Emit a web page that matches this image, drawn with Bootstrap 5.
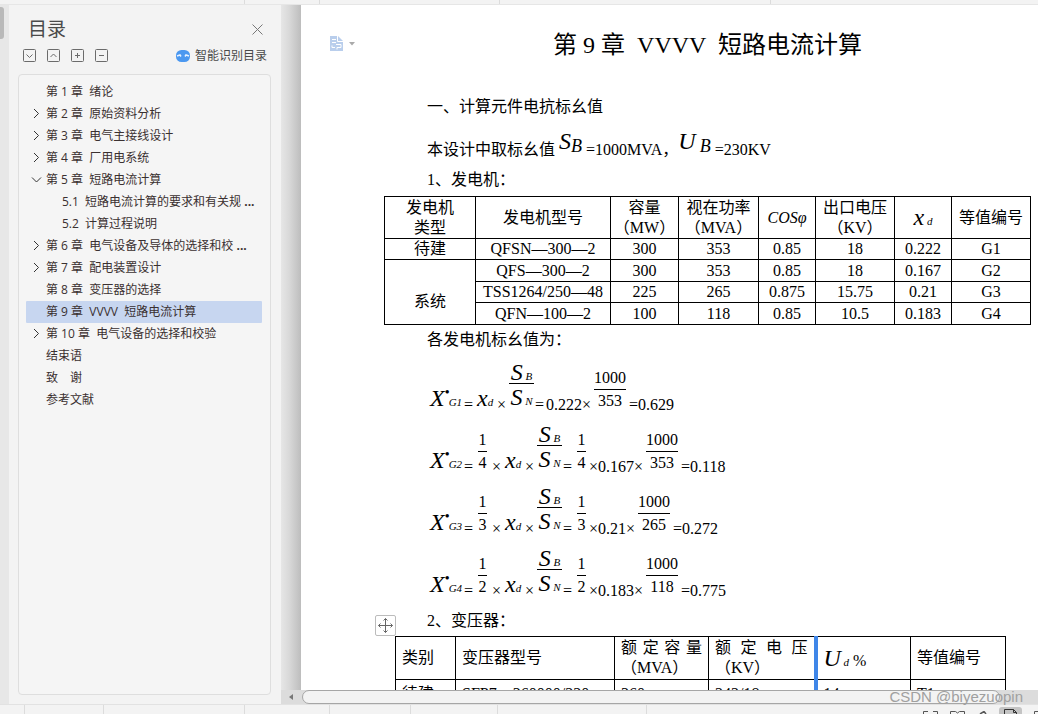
<!DOCTYPE html>
<html lang="zh-CN">
<head>
<meta charset="utf-8">
<meta name="viewport" content="width=device-width, initial-scale=1">
<title>第 9 章 VVVV 短路电流计算</title>
<link href="https://cdn.jsdelivr.net/npm/bootstrap@5.3.0/dist/css/bootstrap.min.css" rel="stylesheet">
<style>
  body { background: #f3f3f3; font-family: "Open Sans", "Noto Sans CJK SC", sans-serif; font-size: 12px; line-height: 22px; color: #3a3030; }
  svg { display: block; }

  /* window chrome */
  .top-strip { height: 5px; border-bottom: 1px solid #e6e6e6; }
  .tick { width: 1px; background: #dcdcdc; }
  .left-rail { width: 9px; background: #e7e7e7; }
  .left-thumb { width: 4px; height: 32px; margin-top: 2px; background: #b9b9b9; border-radius: 0 3px 3px 0; }

  /* outline panel */
  .outline { width: 272px; padding: 12px 10px 9px 9px; }
  .outline h1 { font-size: 19px; line-height: 24px; color: #4a4a4a; font-weight: 400; padding-left: 10px; }
  .tools { padding: 4px 0 0 5px; }
  .plain-btn { border: 0; background: none; padding: 0; color: #6b6b6b; }
  .tree-box { border: 1px solid #dedede; border-radius: 4px; background: #f5f5f5; padding: 6px 8px 0 7px; margin-top: 7px; }
  .tree-box a { height: 22px; color: #3a3030; text-decoration: none; white-space: pre; }
  .tree-box a.picked { background: #c7d6f0; border-radius: 1px; }
  .tree-box .mark-slot { width: 20px; padding: 0 0 2px 5px; }
  .tree-box .sub { padding-left: 16px; }
  .smart { color: #4a4a4a; text-decoration: none; }

  /* paper */
  .desk-edge { width: 20px; background: linear-gradient(90deg, #e6e6e6, #d9d9d9 40%, #bdbdbd); }
  .paper { background: #fff; color: #000; font-family: "Liberation Serif", "Noto Sans CJK SC", serif; font-size: 16px; line-height: 22px; padding: 0 7px 0 83px; }
  .paper h2 { font-size: 24px; line-height: 32px; font-weight: 400; margin: 24px 0 35px; white-space: pre; }
  .indent { padding-left: 43px; }
  .base-line { height: 43px; }
  .base-line .big { padding-bottom: 8px; }
  .base-line .mid { padding-bottom: 6px; }
  .after-table { padding-top: 4px; }
  .second-head { padding-top: 11px; padding-bottom: 4px; }
  .doc-flag { left: 29px; top: 31px; }
  .grid-table { table-layout: fixed; border-collapse: collapse; width: 100%; line-height: 20px; text-align: center; }
  .grid-table td, .grid-table th { border: 1px solid #000; padding: 0; font-weight: 400; height: 21px; }
  .grid-table tr:nth-child(odd) td { height: 22px; }
  .generators { margin-top: 1px; }
  .generators th { height: 42px; }
  .grid-table .low-cell { padding-top: 20px; }
  .transformers { margin-left: 11px; margin-right: 25px; }
  .transformers th, .transformers td { text-align: left; padding: 0 6px; height: 43px; }
  .transformers td { height: 28px; }
  .spread { text-align-last: justify; }
  .grip-line { border-left: 4px solid #3f86e8 !important; }
  .move-handle { width: 21px; height: 21px; border: 1px solid #bcbcbc; border-radius: 2px; background: #fff; padding: 2px; left: 74px; top: 610px; }

  /* formulas */
  .eq { height: 62px; }
  .eq > span, .eq > i { flex: none; }
  .big { font-size: 24px; line-height: 24px; font-style: italic; }
  .tiny { font-size: 11px; line-height: 14px; font-style: italic; }
  .mid { font-size: 18px; line-height: 18px; font-style: italic; }
  .plain { line-height: 16px; }
  .star { display: inline-block; width: 4px; line-height: 0; font-size: 14px; vertical-align: 9px; }
  .frac { line-height: 18px; text-align: center; padding-bottom: 3px; }
  .frac > span { display: block; }
  .frac > span:first-child { border-bottom: 1px solid #000; padding-bottom: 2px; }
  .frac > span:last-child { padding-top: 2px; }
  .w-one { width: 9px; margin: 0 3px; }
  .w-thousand { width: 32px; margin: 0 3px; }
  .w-sym { width: 25px; margin: 0 1px; padding-bottom: 0; }
  .w-sym i { line-height: inherit; }
  .w-sym > span:first-child { line-height: 14px; padding-bottom: 0; }
  .w-sym > span:last-child { line-height: 24px; padding-top: 1px; }
  .w-x { width: 37px; padding-left: 3px; padding-bottom: 1px; }
  .w-eq { width: 11px; }
  .w-xd { width: 20px; padding-left: 2px; padding-bottom: 1px; }
  .w-times { width: 13px; text-align: center; }

  /* bottom bars */
  .hbar { height: 14px; background: #dcdcdc; }
  .hbar-thumb { height: 14px; border: 1px solid #a6a6a6; border-radius: 7px; background: #f3f3f3; margin-right: 38px; }
  .status { height: 10px; border-top: 1px solid #e2e2e2; }
  .view-icons { gap: 12px; padding-top: 3px; right: 0; bottom: 0; }
  .view-on { width: 23px; height: 7px; background: #c4c4c4; border-radius: 3px 3px 0 0; padding: 2px 5px 0; }
  .watermark { right: 15px; bottom: 7px; font: 15px/20px "Liberation Sans", sans-serif; color: #a0a0a0; }
</style>
</head>
<body>
<div class="vh-100 d-flex flex-column overflow-hidden position-relative">
  <div class="top-strip flex-shrink-0 d-flex" data-gaps="244 74 179 270"></div>

  <div class="d-flex flex-grow-1 overflow-hidden">
    <div class="left-rail flex-shrink-0"><div class="left-thumb"></div></div>

    <aside class="outline flex-shrink-0 d-flex flex-column">
      <header class="d-flex justify-content-between align-items-center">
        <h1 class="m-0">目录</h1>
        <button class="plain-btn me-2" aria-label="关闭"><svg width="11" height="11" viewBox="0 0 11 11" fill="none" stroke="#777"><path d="M.5.5l10 10M10.500.5l-10 10"/></svg></button>
      </header>
      <div class="tools d-flex align-items-center">
        <div class="d-flex" style="gap:10px">
          <button class="plain-btn" aria-label="全部展开"><svg width="14" height="14" viewBox="0 0 14 14" fill="none" stroke="#6b6b6b"><rect x=".5" y=".5" width="12" height="12" rx="1"/><path d="M3.500 5.500l3 3 3-3"/></svg></button>
          <button class="plain-btn" aria-label="全部收起"><svg width="14" height="14" viewBox="0 0 14 14" fill="none" stroke="#6b6b6b"><rect x=".5" y=".5" width="12" height="12" rx="1"/><path d="M3.500 8l3-3 3 3"/></svg></button>
          <button class="plain-btn" aria-label="增加"><svg width="14" height="14" viewBox="0 0 14 14" fill="none" stroke="#6b6b6b"><rect x=".5" y=".5" width="12" height="12" rx="1"/><path d="M4 6.500h5M6.500 4v5"/></svg></button>
          <button class="plain-btn" aria-label="减少"><svg width="14" height="14" viewBox="0 0 14 14" fill="none" stroke="#6b6b6b"><rect x=".5" y=".5" width="12" height="12" rx="1"/><path d="M4 6.500h5"/></svg></button>
        </div>
        <a class="smart ms-auto me-1 d-flex align-items-center" style="gap:5px" href="#">
          <svg width="14" height="12" viewBox="0 0 14 12"><rect width="14" height="12" rx="5.500" fill="#4b98f0"/><path d="M1 6l3-1 1 1.500M9 6.500L10 5l3 1" fill="none" stroke="#e8f2ff" stroke-width="1.500"/></svg>智能识别目录</a>
      </div>
      <nav class="tree-box flex-grow-1 d-flex flex-column" aria-label="目录" id="tree"></nav>
    </aside>

    <div class="d-flex flex-column flex-grow-1 overflow-hidden">
      <div class="d-flex flex-grow-1 overflow-hidden">
        <div class="desk-edge flex-shrink-0"></div>
        <main class="paper flex-grow-1 position-relative overflow-hidden">
          <button class="plain-btn doc-flag position-absolute d-flex align-items-center" style="gap:6px" aria-label="段落">
            <svg width="13" height="15" viewBox="0 0 13 15"><path d="M0 0h8l5 5v10H0z" fill="#b9ceec"/><path d="M7.500 0v5.500H13M2 3.500h4M2 6.500h4M2 9.500v2h3M6 8.500h5v3H7v2" fill="none" stroke="#fff"/></svg>
            <svg width="6" height="4" viewBox="0 0 6 4"><path d="M0 0h6L3 3.500z" fill="#aaa"/></svg>
          </button>
          <h2 class="text-center">第 9 章  VVVV  短路电流计算</h2>
          <div class="indent">一、计算元件电抗标幺值</div>
          <div class="indent base-line d-flex align-items-end">
            <span>本设计中取标幺值</span><i class="big ps-1">S</i><i class="mid">B</i><span class="ps-1">=1000MVA，</span><i class="big">U</i><i class="mid ps-1">B</i><span class="ps-1">=230KV</span>
          </div>
          <div class="indent pt-2 pb-1">1、发电机：</div>
          <table class="grid-table generators">
            <colgroup><col style="width:91px"><col style="width:135px"><col style="width:68px"><col style="width:80px"><col style="width:57px"><col style="width:79px"><col style="width:57px"><col style="width:79px"></colgroup>
            <tr><th>发电机<br>类型</th><th>发电机型号</th><th>容量<br>（MW）</th><th>视在功率<br>（MVA）</th><th><i>COSφ</i></th><th>出口电压<br>（KV）</th><th><i class="big">x</i><i class="tiny"> d</i></th><th>等值编号</th></tr>
            <tr><td>待建</td><td>QFSN—300—2</td><td>300</td><td>353</td><td>0.85</td><td>18</td><td>0.222</td><td>G1</td></tr>
            <tr><td rowspan="3" class="low-cell">系统</td><td>QFS—300—2</td><td>300</td><td>353</td><td>0.85</td><td>18</td><td>0.167</td><td>G2</td></tr>
            <tr><td>TSS1264/250—48</td><td>225</td><td>265</td><td>0.875</td><td>15.75</td><td>0.21</td><td>G3</td></tr>
            <tr><td>QFN—100—2</td><td>100</td><td>118</td><td>0.85</td><td>10.5</td><td>0.183</td><td>G4</td></tr>
          </table>
          <div class="indent after-table">各发电机标幺值为：</div>
          <div class="indent" id="formulas"></div>
          <div class="indent second-head">2、变压器：</div>
          <div class="transformers">
            <table class="grid-table">
              <colgroup><col style="width:60px"><col style="width:159px"><col style="width:94px"><col style="width:107px"><col style="width:95px"><col style="width:95px"></colgroup>
              <tr><th>类别</th><th>变压器型号</th><th><div class="spread">额 定 容 量</div>（MVA）</th><th><div class="spread">额 定 电 压</div>（KV）</th><th class="grip-line"><i class="big">U</i><i class="tiny"> d</i> %</th><th>等值编号</th></tr>
              <tr><td>待建</td><td>SFP7—360000/220</td><td>360</td><td>242/18</td><td class="grip-line">14</td><td>T1</td></tr>
            </table>
          </div>
          <button class="move-handle position-absolute" aria-label="移动表格"><svg width="15" height="15" viewBox="0 0 15 15" fill="none" stroke="#666"><path d="M7.500 0.500v14M.5 7.500h14M5.500 2.500l2-2 2 2M5.500 12.500l2 2 2-2M2.500 5.500l-2 2 2 2M12.500 5.500l2 2-2 2"/></svg></button>
        </main>
      </div>
      <div class="hbar flex-shrink-0 d-flex align-items-center">
        <button class="plain-btn px-2" aria-label="向左滚动"><svg width="5" height="6" viewBox="0 0 5 6"><path d="M4 0v6L0 3z" fill="#777"/></svg></button>
        <div class="hbar-thumb flex-grow-1"></div>
      </div>
    </div>
  </div>

  <footer class="status flex-shrink-0 d-flex" data-gaps="24 78 140 84 80 86 148"></footer>
  <div class="view-icons position-absolute d-flex align-items-end">
    <svg width="15" height="3" viewBox="0 0 15 3" fill="none" stroke="#555"><path d="M.5 3V.5H5M10 .5h4.500V3"/></svg>
    <svg width="15" height="3" viewBox="0 0 15 3" fill="none" stroke="#555"><path d="M.5 3V.5h5L7.500 2l2-1.500h5V3"/></svg>
    <svg width="10" height="3" viewBox="0 0 10 3" fill="none" stroke="#555" stroke-width="1.500"><path d="M3 3L7 .5 9 3"/></svg>
    <div class="view-on"><svg width="13" height="5" viewBox="0 0 13 5" fill="none" stroke="#333"><path d="M.5 5V.5h9l3 3V5M9.500.5v3h3"/></svg></div>
    <svg width="4" height="3" viewBox="0 0 4 3" fill="none" stroke="#555"><path d="M.5 3V.5H4"/></svg>
  </div>
  <div class="watermark position-absolute">CSDN @biyezuopin</div>
</div>

<script>
  // outline entries: [arrow, text, kind]
  const entries = [
    ['', '第 1 章  绪论'], ['>', '第 2 章  原始资料分析'], ['>', '第 3 章  电气主接线设计'],
    ['>', '第 4 章  厂用电系统'], ['v', '第 5 章  短路电流计算'],
    ['', '5.1  短路电流计算的要求和有关规 <b>...</b>', 'sub'], ['', '5.2  计算过程说明', 'sub'],
    ['>', '第 6 章  电气设备及导体的选择和校 <b>...</b>'], ['>', '第 7 章  配电装置设计'],
    ['', '第 8 章  变压器的选择'], ['', '第 9 章  VVVV  短路电流计算', 'picked'],
    ['>', '第 10 章  电气设备的选择和校验'], ['', '结束语'], ['', '致　谢'], ['', '参考文献']
  ];
  const arrows = { '': '', '>': 'M3 1l4.500 4.500L3 10', 'v': 'M1 3.500L5.500 8 10 3.500' };
  document.getElementById('tree').innerHTML = entries.map(([a, t, k]) =>
    `<a href="#" class="d-flex align-items-center ${k || ''}"><span class="mark-slot flex-shrink-0"><svg width="11" height="11" viewBox="0 0 11 11" fill="none" stroke="#333"><path d="${arrows[a]}"/></svg></span><span>${t}</span></a>`).join('');

  // per-unit reactance of each generator: [n, divisor, xd, rating, result]
  const frac = (a, b, w) => `<span class="frac ${w}"><span>${a}</span><span>${b}</span></span>`;
  const sym = frac('<i class="big">S</i><i class="tiny"> B</i>', '<i class="big">S</i><i class="tiny"> N</i>', 'w-sym');
  const times = '<span class="plain w-times">×</span>';
  document.getElementById('formulas').innerHTML =
    [[1, 0, '0.222', 353, '0.629'], [2, 4, '0.167', 353, '0.118'], [3, 3, '0.21', 265, '0.272'], [4, 2, '0.183', 118, '0.775']]
    .map(([n, d, x, s, r]) => `<div class="eq d-flex align-items-end"><span class="w-x"><i class="big">X</i><span class="star">•</span><i class="tiny">G${n}</i></span><span class="plain w-eq">=</span>${d ? frac(1, d, 'w-one') + times : ''}<span class="w-xd"><i class="big">x</i><i class="tiny">d</i></span>${times}${sym}<span class="plain w-eq">=</span>${d ? frac(1, d, 'w-one') : ''}<span class="plain">${d ? '×' : ''}${x}×</span>${frac(1000, s, 'w-thousand')}<span class="plain">=${r}</span></div>`).join('');

  // separators of the toolbar and the status bar, spread in proportion to the window
  document.querySelectorAll('[data-gaps]').forEach(bar => {
    bar.innerHTML = bar.dataset.gaps.split(' ')
      .map(g => `<span class="tick" style="margin-left:${g / 10.38}%"></span>`).join('');
  });
</script>
<script src="https://cdn.jsdelivr.net/npm/bootstrap@5.3.0/dist/js/bootstrap.bundle.min.js"></script>
</body>
</html>
